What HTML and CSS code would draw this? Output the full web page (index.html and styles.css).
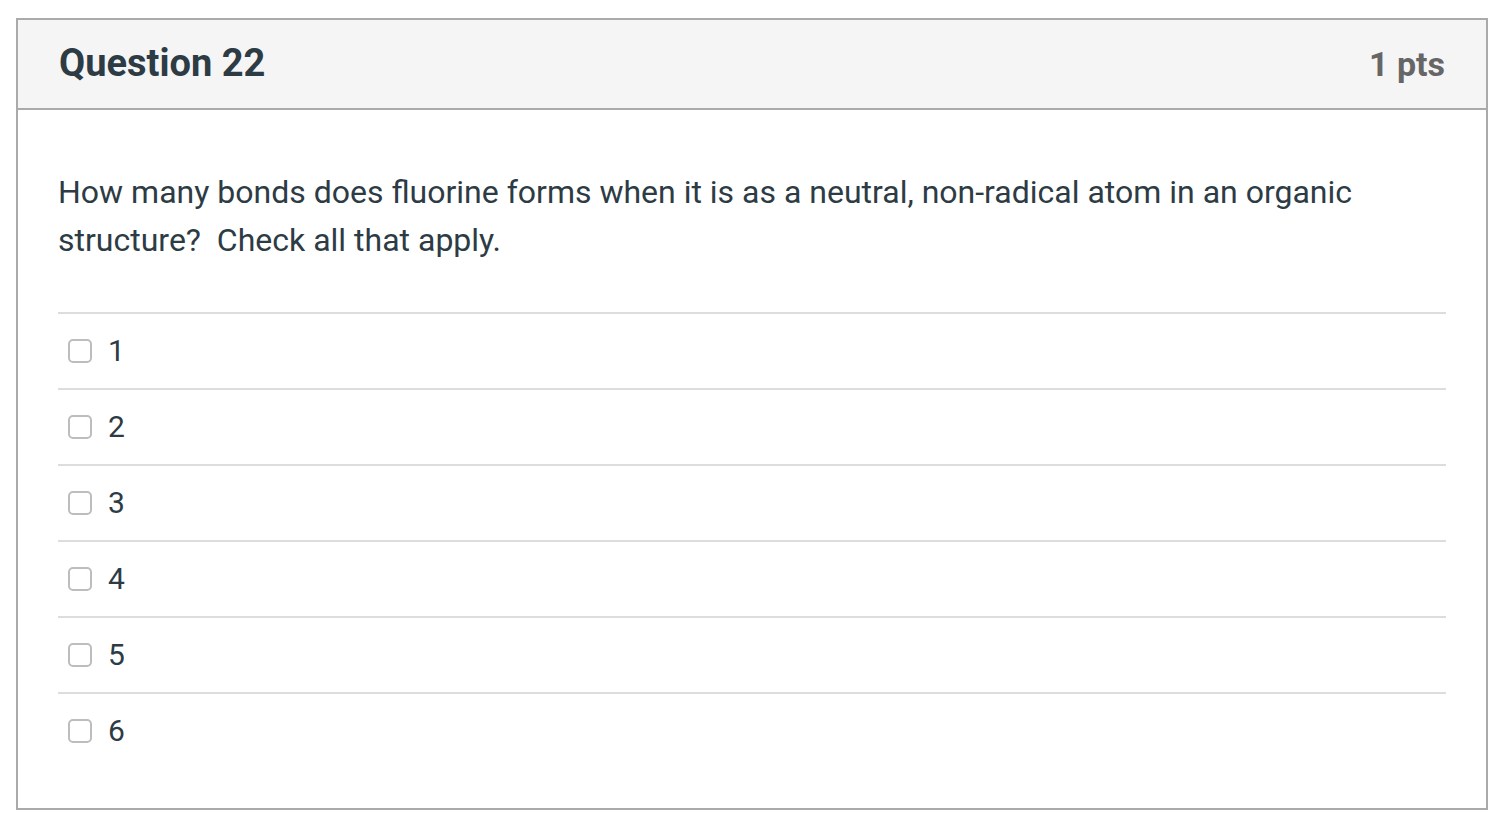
FILE: index.html
```html
<!DOCTYPE html>
<html lang="en">
<head>
<meta charset="utf-8">
<title>Question 22</title>
<link rel="stylesheet" href="styles.css">
</head>
<body>
<div class="question">
  <div class="q-header">
    <h2 class="q-title">Question 22</h2>
    <span class="q-points">1 pts</span>
  </div>
  <div class="q-body">
    <p class="q-text">How many bonds does fluorine forms when it is as a neutral, non-radical atom in an organic structure?&nbsp; Check all that apply.</p>
    <div class="answers">
      <label class="answer"><span class="box"></span><span class="label">1</span></label>
      <label class="answer"><span class="box"></span><span class="label">2</span></label>
      <label class="answer"><span class="box"></span><span class="label">3</span></label>
      <label class="answer"><span class="box"></span><span class="label">4</span></label>
      <label class="answer"><span class="box"></span><span class="label">5</span></label>
      <label class="answer"><span class="box"></span><span class="label">6</span></label>
    </div>
  </div>
</div>
</body>
</html>
```

FILE: styles.css
```css
html, body {
  margin: 0;
  padding: 0;
  background: #ffffff;
}
body {
  font-family: Roboto, "Liberation Sans", sans-serif;
  color: #2d3b45;
  padding: 18px 18px 0 16px;
}
.question {
  box-sizing: border-box;
  width: 1472px;
  height: 792px;
  border: 2px solid #aaaaaa;
  background: #ffffff;
}
.q-header {
  height: 88px;
  background: #f5f5f5;
  border-bottom: 2px solid #aaaaaa;
  display: flex;
  align-items: baseline;
  justify-content: space-between;
  padding: 0 41px 0 41px;
}
.q-title {
  margin: 0;
  font-size: 38px;
  font-weight: 700;
  line-height: 86px;
  color: #2d3b45;
}
.q-points {
  font-size: 34px;
  font-weight: 700;
  color: #666666;
}
.q-body {
  padding: 0 40px 39px 40px;
}
.q-text {
  margin: 58px 0 48px 0;
  font-size: 32px;
  line-height: 48px;
}
.answer {
  display: flex;
  align-items: center;
  height: 74px;
  border-top: 2px solid #dddddd;
}
.box {
  box-sizing: border-box;
  width: 24px;
  height: 24px;
  margin-left: 10px;
  border: 2px solid #bdbdbd;
  border-radius: 5px;
  background: #fff;
}
.label {
  margin-left: 16px;
  font-size: 30px;
  line-height: 30px;
}
```
